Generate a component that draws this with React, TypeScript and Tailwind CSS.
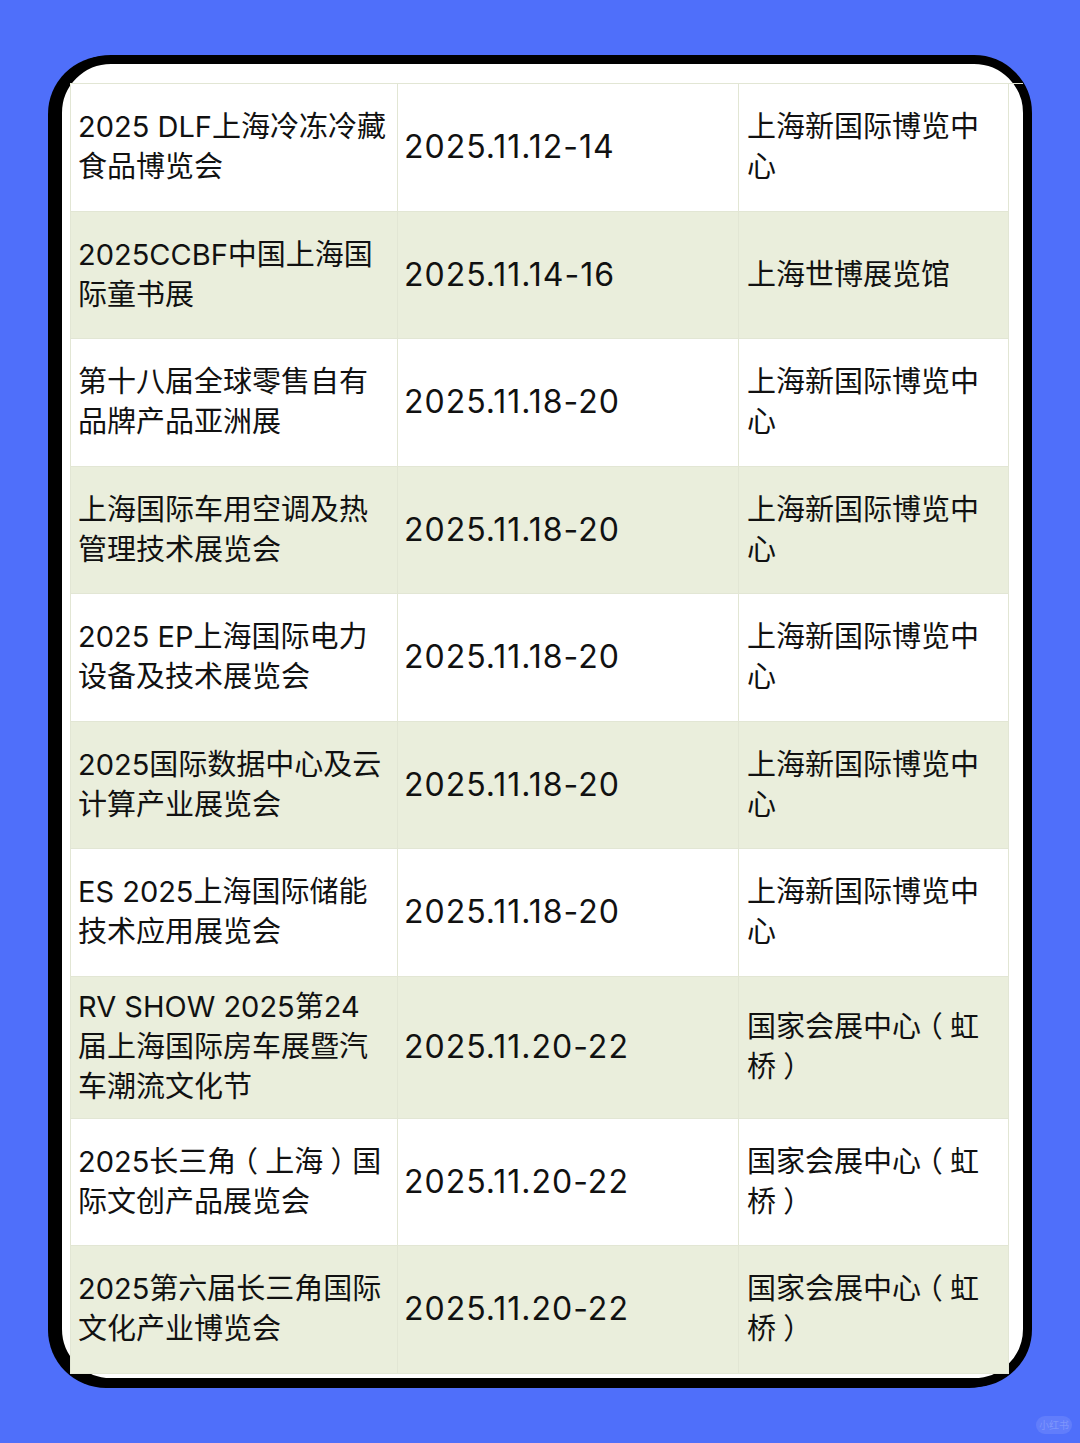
const rows = [
  { name: ['2025 DLF上海冷冻冷藏', '食品博览会'], date: '2025.11.12-14', place: ['上海新国际博览中', '心'] },
  { name: ['2025CCBF中国上海国', '际童书展'], date: '2025.11.14-16', place: ['上海世博展览馆'] },
  { name: ['第十八届全球零售自有', '品牌产品亚洲展'], date: '2025.11.18-20', place: ['上海新国际博览中', '心'] },
  { name: ['上海国际车用空调及热', '管理技术展览会'], date: '2025.11.18-20', place: ['上海新国际博览中', '心'] },
  { name: ['2025 EP上海国际电力', '设备及技术展览会'], date: '2025.11.18-20', place: ['上海新国际博览中', '心'] },
  { name: ['2025国际数据中心及云', '计算产业展览会'], date: '2025.11.18-20', place: ['上海新国际博览中', '心'] },
  { name: ['ES 2025上海国际储能', '技术应用展览会'], date: '2025.11.18-20', place: ['上海新国际博览中', '心'] },
  { name: ['RV SHOW 2025第24', '届上海国际房车展暨汽', '车潮流文化节'], date: '2025.11.20-22', place: ['国家会展中心（虹', '桥）'] },
  { name: ['2025长三角（上海）国', '际文创产品展览会'], date: '2025.11.20-22', place: ['国家会展中心（虹', '桥）'] },
  { name: ['2025第六届长三角国际', '文化产业博览会'], date: '2025.11.20-22', place: ['国家会展中心（虹', '桥）'] },
];

// full-width brackets sit centred in their box in the screenshot
function withParens(text: string) {
  return text.split(/([（）])/).map((part, i) =>
    part === '（' || part === '）' ? (
      <span key={i} className="inline-block w-[29px] text-center [font-feature-settings:'halt']">
        {part}
      </span>
    ) : (
      part
    )
  );
}

function Lines({ lines }: { lines: string[] }) {
  return (
    <div>
      {lines.map((l, i) => (
        <div key={i} className="whitespace-nowrap">
          {withParens(l)}
        </div>
      ))}
    </div>
  );
}

export default function App() {
  return (
    <div
      className="relative w-[1080px] h-[1443px] bg-[#4f6ffa] overflow-hidden pt-[55px] pl-[53px]"
      style={{ fontFamily: 'Inter, "Noto Sans CJK SC", sans-serif' }}
    >
      <div className="w-[979px] h-[1332px] bg-white border-[9px] border-black rounded-[58px] shadow-[-5px_1px_0_0_#000] pt-[19px] pl-[8px]">
        <div className="grid grid-cols-[327px_341px_270px] border-t border-l border-[#e2e6d4] text-[29px] leading-[40px] text-[#111]">
          {rows.map((r, i) => {
            const bg = i % 2 === 1 ? 'bg-[#eaeedc]' : 'bg-white';
            const h = i === 7 ? 'h-[142px]' : 'h-[127.5px]';
            const cell = `${bg} ${h} flex items-center border-r border-b border-[#e2e6d4]`;
            return (
              <div key={i} className="contents">
                <div className={`${cell} pl-[7px]`}>
                  <Lines lines={r.name} />
                </div>
                <div className={`${cell} pl-[6px]`}>
                  <span className="whitespace-nowrap text-[32px] tracking-[1px]">{r.date}</span>
                </div>
                <div className={`${cell} pl-[8px]`}>
                  <Lines lines={r.place} />
                </div>
              </div>
            );
          })}
        </div>
      </div>
      <div className="absolute left-[1036px] top-[1416px] w-[36px] h-[18px] rounded-full bg-white/10 flex items-center justify-center text-[10px] text-white/20">
        小红书
      </div>
    </div>
  );
}
